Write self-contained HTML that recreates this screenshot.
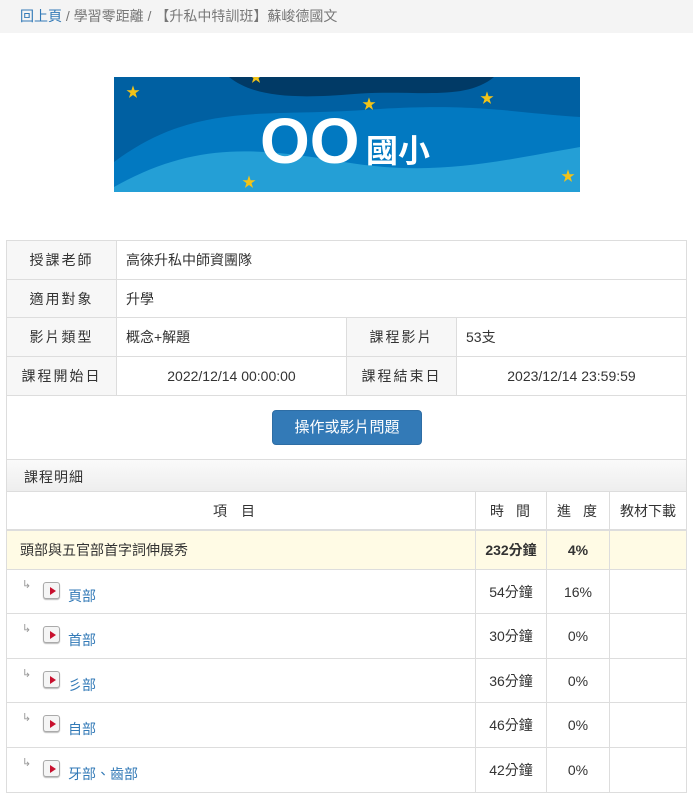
<!DOCTYPE html>
<html><head><meta charset="utf-8"><style>
*{box-sizing:border-box;margin:0;padding:0}
body{width:693px;height:793px;overflow:hidden;background:#fff;font-family:"Liberation Sans","Noto Sans CJK TC",sans-serif;font-size:14px;color:#333;position:relative}
.bc{position:absolute;left:0;top:0;width:693px;height:33px;background:#f4f4f4;padding:6px 0 0 20px;font-size:14px;color:#777}
.bc a{color:#337ab7;text-decoration:none}
.ban{position:absolute;left:114px;top:77px;width:466px;height:115px;overflow:hidden}
.abs{position:absolute}
.cell{position:absolute;border-right:1px solid #ddd;border-bottom:1px solid #ddd;display:flex;align-items:center}
.lab{background:#f7f7f7;justify-content:center;letter-spacing:2px}
.box{position:absolute;left:6px;top:240px;width:681px;height:553px;border:1px solid #ddd;border-bottom:none}
.btn{position:absolute;left:272px;top:410px;width:150px;height:35px;background:#337ab7;border:1px solid #2e6da4;border-radius:4px;color:#fff;font-size:15px;text-align:center;line-height:33px}
.hd{position:absolute;left:6px;top:459px;width:681px;height:33px;background:linear-gradient(#fafafa,#eee);border:1px solid #ddd;padding:7px 0 0 17px;letter-spacing:1px}
.c{justify-content:center}
.play{position:absolute;width:17px;height:17px;border:1px solid #aaa;border-radius:3px;background:#f5f5f5;box-shadow:0 1px 1px #bbb}
.play:after{content:"";position:absolute;left:6px;top:4px;border-left:6px solid #c8102e;border-top:4px solid transparent;border-bottom:4px solid transparent}
.lk{color:#337ab7}
.arr{position:absolute;color:#999;font-size:11px}
</style></head><body>
<div class="bc"><a>回上頁</a> / 學習零距離 / 【升私中特訓班】蘇峻德國文</div>
<div class="ban">
<svg width="466" height="115" viewBox="0 0 466 115">
<rect width="466" height="115" fill="#0279c1"/>
<path d="M0 0H466V40C400 36 360 25 250 33C150 40 80 25 0 85Z" fill="#0060a2"/>
<path d="M115 0H380C350 25 300 12 240 17C180 22 140 20 115 0Z" fill="#013a66"/>
<path d="M0 115V110C80 65 140 70 230 85C320 100 380 85 466 70V115Z" fill="#249fd6"/>
<text x="146" y="86" fill="#fff" font-size="64" font-weight="bold" font-family="Liberation Sans,sans-serif">OO</text>
<text x="252" y="85" fill="#fff" font-size="32" font-weight="bold" font-family="Noto Sans CJK TC,sans-serif">國小</text>
<g fill="#f2c318" font-size="14"><text x="12" y="20">★</text><text x="135" y="5">★</text><text x="248" y="32">★</text><text x="366" y="26">★</text><text x="128" y="110">★</text><text x="447" y="104">★</text></g>
</svg></div>
<div class="box"></div>
<div class="cell lab" style="left:7px;top:241px;width:110px;height:39px">授課老師</div>
<div class="cell" style="left:117px;top:241px;width:570px;height:39px;padding-left:9px">高徠升私中師資團隊</div>
<div class="cell lab" style="left:7px;top:280px;width:110px;height:38px">適用對象</div>
<div class="cell" style="left:117px;top:280px;width:570px;height:38px;padding-left:9px">升學</div>
<div class="cell lab" style="left:7px;top:318px;width:110px;height:39px">影片類型</div>
<div class="cell" style="left:117px;top:318px;width:230px;height:39px;padding-left:9px">概念+解題</div>
<div class="cell lab" style="left:347px;top:318px;width:110px;height:39px">課程影片</div>
<div class="cell" style="left:457px;top:318px;width:230px;height:39px;padding-left:9px">53支</div>
<div class="cell lab" style="left:7px;top:357px;width:110px;height:39px">課程開始日</div>
<div class="cell c" style="left:117px;top:357px;width:230px;height:39px">2022/12/14 00:00:00</div>
<div class="cell lab" style="left:347px;top:357px;width:110px;height:39px">課程結束日</div>
<div class="cell c" style="left:457px;top:357px;width:230px;height:39px">2023/12/14 23:59:59</div>
<div class="btn">操作或影片問題</div>
<div class="hd">課程明細</div>
<div class="cell c" style="left:7px;top:492px;width:469px;height:39px;border-bottom:2px solid #ddd;letter-spacing:14px">項目</div>
<div class="cell c" style="left:476px;top:492px;width:71px;height:39px;border-bottom:2px solid #ddd;letter-spacing:12px;padding-left:10px">時間</div>
<div class="cell c" style="left:547px;top:492px;width:63px;height:39px;border-bottom:2px solid #ddd;letter-spacing:12px;padding-left:10px">進度</div>
<div class="cell c" style="left:610px;top:492px;width:77px;height:39px;border-bottom:2px solid #ddd">教材下載</div>
<div class="cell" style="left:7px;top:531px;width:469px;height:39px;background:#fffbe5;padding-left:13px">頭部與五官部首字詞伸展秀</div>
<div class="cell c" style="left:476px;top:531px;width:71px;height:39px;background:#fffbe5;font-weight:bold">232分鐘</div>
<div class="cell c" style="left:547px;top:531px;width:63px;height:39px;background:#fffbe5;font-weight:bold">4%</div>
<div class="cell" style="left:610px;top:531px;width:77px;height:39px;background:#fffbe5"></div>

<div class="cell" style="left:7px;top:570px;width:469px;height:44px"><span class="arr" style="left:15px;top:8px">↳</span><span class="play" style="left:36px;top:12px"></span><span class="abs lk" style="left:61px;top:16px">頁部</span></div>
<div class="cell c" style="left:476px;top:570px;width:71px;height:44px">54分鐘</div>
<div class="cell c" style="left:547px;top:570px;width:63px;height:44px">16%</div>
<div class="cell" style="left:610px;top:570px;width:77px;height:44px"></div>

<div class="cell" style="left:7px;top:614px;width:469px;height:45px"><span class="arr" style="left:15px;top:8px">↳</span><span class="play" style="left:36px;top:12px"></span><span class="abs lk" style="left:61px;top:16px">首部</span></div>
<div class="cell c" style="left:476px;top:614px;width:71px;height:45px">30分鐘</div>
<div class="cell c" style="left:547px;top:614px;width:63px;height:45px">0%</div>
<div class="cell" style="left:610px;top:614px;width:77px;height:45px"></div>

<div class="cell" style="left:7px;top:659px;width:469px;height:44px"><span class="arr" style="left:15px;top:8px">↳</span><span class="play" style="left:36px;top:12px"></span><span class="abs lk" style="left:61px;top:16px">彡部</span></div>
<div class="cell c" style="left:476px;top:659px;width:71px;height:44px">36分鐘</div>
<div class="cell c" style="left:547px;top:659px;width:63px;height:44px">0%</div>
<div class="cell" style="left:610px;top:659px;width:77px;height:44px"></div>

<div class="cell" style="left:7px;top:703px;width:469px;height:45px"><span class="arr" style="left:15px;top:8px">↳</span><span class="play" style="left:36px;top:12px"></span><span class="abs lk" style="left:61px;top:16px">自部</span></div>
<div class="cell c" style="left:476px;top:703px;width:71px;height:45px">46分鐘</div>
<div class="cell c" style="left:547px;top:703px;width:63px;height:45px">0%</div>
<div class="cell" style="left:610px;top:703px;width:77px;height:45px"></div>

<div class="cell" style="left:7px;top:748px;width:469px;height:45px"><span class="arr" style="left:15px;top:8px">↳</span><span class="play" style="left:36px;top:12px"></span><span class="abs lk" style="left:61px;top:16px">牙部、齒部</span></div>
<div class="cell c" style="left:476px;top:748px;width:71px;height:45px">42分鐘</div>
<div class="cell c" style="left:547px;top:748px;width:63px;height:45px">0%</div>
<div class="cell" style="left:610px;top:748px;width:77px;height:45px"></div>
</body></html>
